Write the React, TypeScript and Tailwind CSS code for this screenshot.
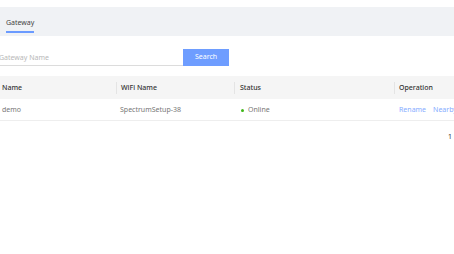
export default function App() {
  const font = { fontFamily: '"Noto Sans", "Open Sans", sans-serif' };
  return (
    <div className="w-[454px] h-[254px] overflow-hidden bg-white text-[7px]" style={font}>
      <div className="h-[7px]" />
      <div className="h-[29px] bg-[#f0f2f5] flex items-end pl-[6px]">
        <div className="pb-[2px] border-b-2 border-[#6b9bff] text-[#444] leading-[12px] mb-[3px]">Gateway</div>
      </div>
      <div className="-ml-[6px] w-[470px]">
        <div className="flex mt-[13px] h-[17px]">
          <input
            className="w-[189px] h-[17px] border-b border-[#dcdcdc] px-[5px] text-[7px] outline-none placeholder:text-[#b8b8b8]"
            placeholder="Gateway Name"
          />
          <button className="w-[46px] h-[17px] bg-[#6e9dff] text-white text-[7px]">Search</button>
        </div>
        <div className="mt-[10px]">
          <div className="flex h-[23px] items-center pt-[1px] bg-[#f5f5f5] text-[#333] font-medium">
            <div className="w-[122px] pl-[8px]">Name</div>
            <div className="w-[118px] pl-[4px] border-l border-[#e4e4e4] h-[12px] flex items-center">WiFi Name</div>
            <div className="w-[160px] pl-[5px] border-l border-[#e4e4e4] h-[12px] flex items-center">Status</div>
            <div className="flex-1 pl-[4px] border-l border-[#e4e4e4] h-[12px] flex items-center">Operation</div>
          </div>
          <div className="flex h-[22px] items-center pt-[2px] text-[#777] border-b border-[#eeeeee]">
            <div className="w-[122px] pl-[8px]">demo</div>
            <div className="w-[118px] pl-[4px]">SpectrumSetup-38</div>
            <div className="w-[160px] pl-[7px] flex items-center gap-[4px]">
              <span className="w-[3px] h-[3px] rounded-full bg-[#3fb618]" />
              Online
            </div>
            <div className="flex-1 pl-[5px] flex gap-[7px] text-[#86acff] whitespace-nowrap">
              <span>Rename</span>
              <span>Nearby</span>
            </div>
          </div>
          <div className="flex justify-end pr-[12px] mt-[11px] text-[#333]">1</div>
        </div>
      </div>
    </div>
  );
}
